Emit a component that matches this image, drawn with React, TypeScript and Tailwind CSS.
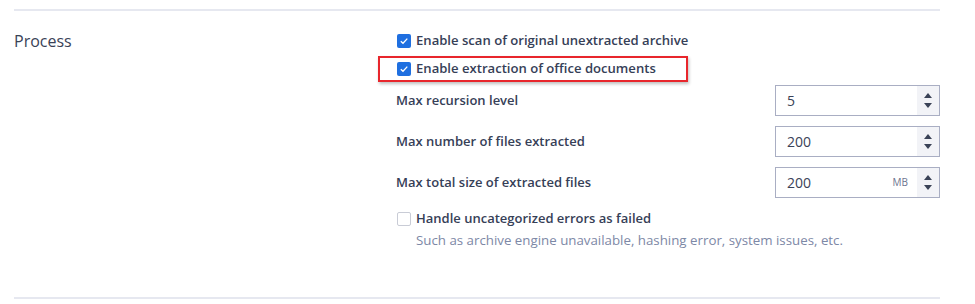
import React from "react";

const font = { fontFamily: '"Open Sans", "Liberation Sans", sans-serif' };

function Check({ checked }: { checked: boolean }) {
  return checked ? (
    <span className="flex h-[14px] w-[14px] items-center justify-center rounded-[2px] bg-[#1f6fe0]">
      <svg width="10" height="10" viewBox="0 0 10 10">
        <path d="M1.8 5.2 L4 7.3 L8.3 2.6" fill="none" stroke="#fff" strokeWidth="1.3" />
      </svg>
    </span>
  ) : (
    <span className="block h-[14px] w-[14px] rounded-[2px] border border-[#c9ccd6] bg-white" />
  );
}

function Spin({ value, unit }: { value: string; unit?: string }) {
  return (
    <div className="flex h-[31px] w-[165px] border border-[#a9aec3] bg-white">
      <div className="flex flex-1 items-center pl-[11px] text-[14px] text-[#3a4257]">{value}</div>
      {unit && <div className="flex items-center pr-[9px] text-[10px] text-[#6d7590]">{unit}</div>}
      <div className="flex w-[22px] flex-col items-center justify-center gap-[5px] bg-[#f2f3f7]">
        <svg width="8" height="5" viewBox="0 0 8 5"><path d="M0 5 L4 0 L8 5 Z" fill="#3b4357" /></svg>
        <svg width="8" height="5" viewBox="0 0 8 5"><path d="M0 0 L8 0 L4 5 Z" fill="#3b4357" /></svg>
      </div>
    </div>
  );
}

function NumRow({ label, value, unit }: { label: string; value: string; unit?: string }) {
  return (
    <div className="flex items-center justify-between">
      <span className="text-[13px] font-semibold text-[#364057]">{label}</span>
      <Spin value={value} unit={unit} />
    </div>
  );
}

export default function App() {
  return (
    <div className="h-[304px] w-[975px] bg-white" style={font}>
      <div className="ml-[14px] w-[926px] pt-[9px]">
        <div className="h-[2px] bg-[#e6e8f0]" />
        <div className="flex h-[286px] pt-[20px]">
          <div className="w-[382px] text-[16px] leading-[20px] text-[#3a4257]">Process</div>
          <div className="flex w-[544px] flex-col">
            <div className="flex h-[20px] items-center gap-[5px] pl-[1px]">
              <Check checked />
              <span className="text-[13.1px] font-semibold text-[#364057]">Enable scan of original unextracted archive</span>
            </div>
            <div className="relative mt-[8px] flex h-[20px] items-center gap-[5px] pl-[1px]">
              <Check checked />
              <span className="text-[13.1px] font-semibold text-[#364057]">Enable extraction of office documents</span>
              <div className="absolute left-[-18px] top-[-3px] h-[26px] w-[310px] border-2 border-[#e8262c] shadow-[1px_2px_3px_rgba(0,0,0,0.25)]" />
            </div>
            <div className="mt-[6px] flex flex-col gap-[10px]">
              <NumRow label="Max recursion level" value="5" />
              <NumRow label="Max number of files extracted" value="200" />
              <NumRow label="Max total size of extracted files" value="200" unit="MB" />
            </div>
            <div className="mt-[11px] flex h-[20px] items-center gap-[5px] pl-[1px]">
              <Check checked={false} />
              <span className="text-[13px] font-semibold text-[#364057]">Handle uncategorized errors as failed</span>
            </div>
            <div className="mt-[1px] pl-[20px] text-[13.3px] leading-[20px] text-[#7d88a6]">
              Such as archive engine unavailable, hashing error, system issues, etc.
            </div>
          </div>
        </div>
        <div className="h-[2px] bg-[#e6e8f0]" />
      </div>
    </div>
  );
}
